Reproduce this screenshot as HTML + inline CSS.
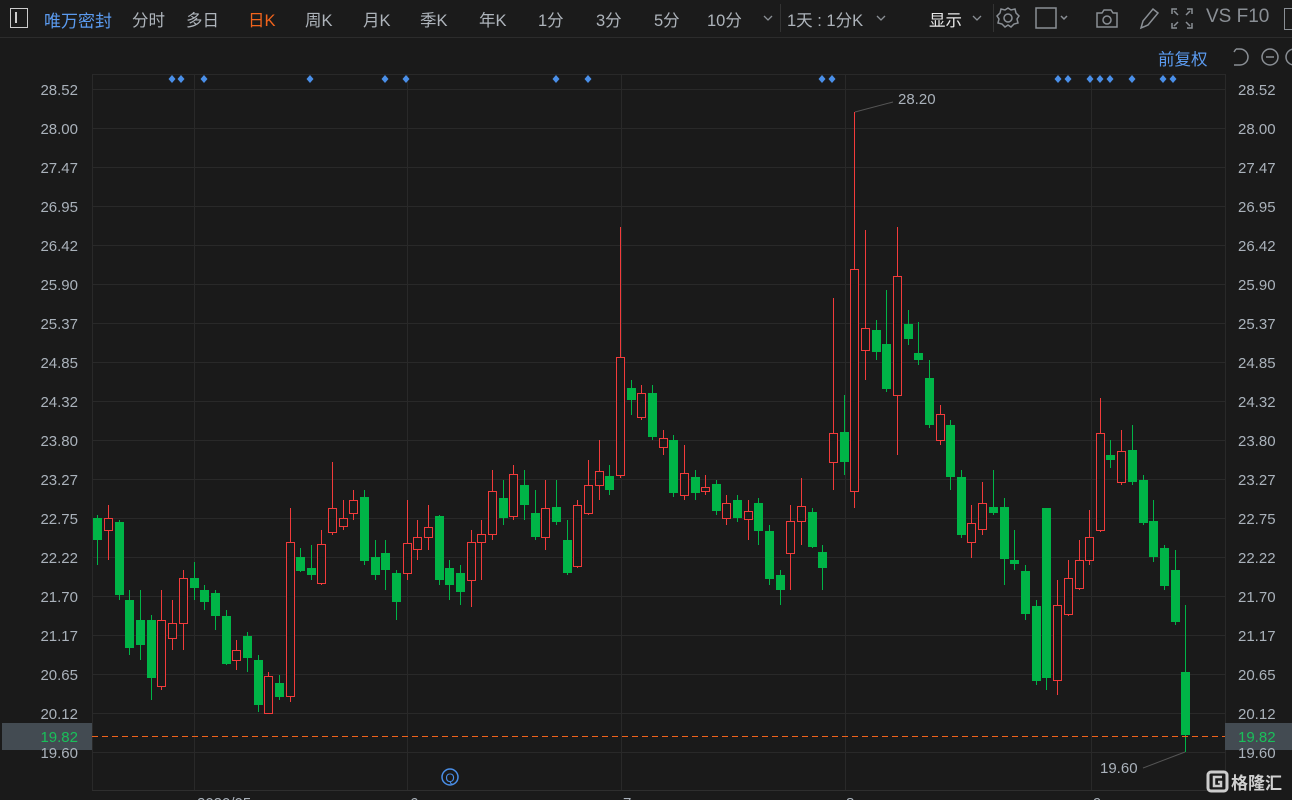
<!DOCTYPE html>
<html><head><meta charset="utf-8"><style>
html,body{margin:0;padding:0;background:#1a1a1a;width:1292px;height:800px;overflow:hidden;font-family:"Liberation Sans","Noto Sans CJK SC",sans-serif}
.t{position:absolute;top:7px;font-size:16.5px;color:#aeb4bb;white-space:nowrap}
</style></head><body>
<div style="position:absolute;left:0;top:0;width:1292px;height:37px;background:#1b1b1b;border-bottom:1px solid #2c2c2c"></div>
<div style="position:absolute;left:10px;top:8px;width:16px;height:18px;border:1.5px solid #ccc"></div>
<div style="position:absolute;left:15px;top:12px;width:1.5px;height:11px;background:#ccc"></div>
<div class="t" style="left:44px;color:#5b9bf0;font-size:17px">唯万密封</div>
<div class="t" style="left:132px">分时</div>
<div class="t" style="left:186px">多日</div>
<div class="t" style="left:248px;color:#f0631c">日K</div>
<div class="t" style="left:305px">周K</div>
<div class="t" style="left:363px">月K</div>
<div class="t" style="left:420px">季K</div>
<div class="t" style="left:479px">年K</div>
<div class="t" style="left:538px">1分</div>
<div class="t" style="left:596px">3分</div>
<div class="t" style="left:654px">5分</div>
<div class="t" style="left:707px">10分</div>
<svg style="position:absolute;left:0;top:0" width="1000" height="40" fill="none" stroke="#8a8f95" stroke-width="1.3"><path d="M764 16l4 4 4-4M877 16l4 4 4-4M973 16l4 4 4-4"/></svg>
<div style="position:absolute;left:780px;top:4px;width:1px;height:28px;background:#333"></div>
<div class="t" style="left:787px">1天 : 1分K</div>
<div class="t" style="left:929px;color:#e8e8e8">显示</div>
<div style="position:absolute;left:993px;top:4px;width:1px;height:28px;background:#333"></div>
<svg style="position:absolute;left:0;top:0" width="1292" height="40" fill="none" stroke="#8a8f95" stroke-width="1.5">
<circle cx="1008" cy="18" r="4"/><path d="M1008 8l3 2 4-1 1 4 3 3-2 3 1 4-4 1-3 3-3-2-3 2-3-3-4-1 1-4-2-3 3-3 1-4 4 1z"/>
<rect x="1036" y="8" width="20" height="20"/><path d="M1061 16l3 3 3-3"/>
<path d="M1097 13h5l2-3h7l2 3h4v14h-20z"/><circle cx="1107" cy="20" r="4"/>
<path d="M1141 28l2-7 10-12 5 4-10 12z"/>
<path d="M1172 14v-5h5M1187 9h5v5M1192 23v5h-5M1177 28h-5v-5M1174 11l4 4M1190 11l-4 4M1190 26l-4-4M1174 26l4-4"/>
</svg>
<div class="t" style="left:1206px;font-size:19px;top:6px;color:#8a8f95">VS F10</div>
<div style="position:absolute;left:1284px;top:8px;width:16px;height:20px;border:1.5px solid #8a8f95"></div>
<div style="position:absolute;left:1158px;top:46px;font-size:16.5px;color:#5b9bf0">前复权</div>
<svg style="position:absolute;left:1228px;top:44px" width="64" height="26" fill="none" stroke="#8a8f95" stroke-width="1.5">
<path d="M8 5h4a8 8 0 0 1 0 16h-6M8 5l-2 3"/><circle cx="42" cy="13" r="8"/><path d="M38 13h8"/><circle cx="66" cy="13" r="8"/>
</svg>
<svg id="c" style="position:absolute;left:0;top:0" width="1292" height="800"></svg>
<div style="position:absolute;left:2px;top:723px;width:90px;height:27px;background:#434b52"></div>
<div style="position:absolute;left:1225px;top:723px;width:67px;height:27px;background:#434b52"></div>
<svg style="position:absolute;left:0;top:0" width="1292" height="800" id="l"></svg>
<script>
var s='';
var ys=[[28.52,89],[28.00,128],[27.47,167],[26.95,206],[26.42,245],[25.90,284],[25.37,323],[24.85,362],[24.32,401],[23.80,440],[23.27,479],[22.75,518],[22.22,557],[21.70,596],[21.17,635],[20.65,674],[20.12,713],[19.60,752]];
s+='<line x1="92" y1="74.5" x2="1225" y2="74.5" stroke="#292929"/>';
ys.forEach(function(a){s+='<line x1="92" y1="'+(a[1]+.5)+'" x2="1225" y2="'+(a[1]+.5)+'" stroke="#292929"/>';});
[92,194,407,621,845,1091,1225].forEach(function(x){s+='<line x1="'+(x+.5)+'" y1="74" x2="'+(x+.5)+'" y2="790" stroke="#292929"/>';});
s+='<line x1="92" y1="790.5" x2="1225" y2="790.5" stroke="#2e2e2e"/>';
var d=[[97,518,540,515,565,0],[108,518,530,505,560,1],[119,522,595,520,600,0],[129,600,648,590,655,0],[140,620,645,590,660,0],[151,620,678,615,700,0],[161,620,686,590,690,1],[172,623,638,600,650,1],[183,578,623,570,650,1],[194,578,588,562,600,0],[204,590,602,585,610,0],[215,593,616,590,630,0],[226,616,664,610,665,0],[236,650,660,640,670,1],[247,636,658,632,672,0],[258,660,705,655,712,0],[268,676,713,672,714,1],[279,683,697,675,700,0],[290,542,696,508,702,1],[300,557,571,548,572,0],[311,568,575,545,580,0],[321,544,583,530,585,1],[332,508,532,462,535,1],[343,518,526,500,530,1],[353,500,513,490,520,1],[364,497,561,490,565,0],[375,557,575,540,580,0],[385,553,570,540,590,0],[396,573,602,570,620,0],[407,543,573,500,580,1],[417,537,549,520,560,1],[428,527,537,505,550,1],[439,516,580,515,585,0],[449,568,585,560,600,0],[460,573,592,565,605,0],[471,542,580,530,607,1],[481,534,542,520,580,1],[492,491,534,470,540,1],[503,498,518,480,525,0],[513,474,516,465,520,1],[524,485,505,470,520,0],[535,513,537,490,540,0],[545,508,537,480,550,1],[556,507,522,480,525,0],[567,540,573,520,575,0],[577,505,566,500,568,1],[588,485,513,460,515,1],[599,471,485,440,500,1],[609,476,490,465,495,0],[620,357,475,227,478,1],[631,388,400,380,415,0],[641,393,417,385,420,1],[652,393,437,385,440,0],[663,438,447,430,455,1],[673,440,493,435,497,0],[684,473,495,445,500,1],[695,477,493,470,500,0],[705,487,491,475,495,1],[716,484,511,480,515,0],[726,503,518,495,525,1],[737,500,518,495,522,0],[748,511,519,500,540,1],[758,503,531,498,545,0],[769,531,579,525,585,0],[780,575,590,570,605,0],[790,521,553,505,590,1],[801,506,521,478,545,1],[812,512,547,508,548,0],[822,552,568,545,590,0],[833,433,462,298,490,1],[844,432,462,395,475,0],[854,269,491,112,508,1],[865,328,350,230,380,1],[876,330,352,320,360,0],[886,344,389,290,392,0],[897,276,395,227,455,1],[908,324,339,310,345,0],[918,353,360,322,365,0],[929,378,425,360,428,0],[940,414,440,405,445,1],[950,425,477,420,490,0],[961,477,535,470,538,0],[971,523,542,505,558,1],[982,503,529,482,535,1],[993,507,513,470,515,0],[1004,507,559,498,585,0],[1014,560,564,530,570,0],[1025,571,614,565,620,0],[1036,606,681,600,685,0],[1046,508,678,508,690,0],[1057,605,680,580,695,1],[1068,578,614,560,616,1],[1079,560,588,540,590,1],[1089,537,560,510,565,1],[1100,433,530,398,532,1],[1110,455,460,440,468,0],[1121,451,482,430,485,1],[1132,450,482,425,485,0],[1143,480,523,475,525,0],[1153,521,557,500,562,0],[1164,548,586,545,590,0],[1175,570,622,550,625,0],[1185,672,735,605,752,0]];
d.forEach(function(c){var x=c[0],col=c[5]?'#f23b3b':'#00b447';
s+='<line x1="'+(x+.5)+'" y1="'+c[3]+'" x2="'+(x+.5)+'" y2="'+c[1]+'" stroke="'+col+'"/>';
s+='<line x1="'+(x+.5)+'" y1="'+c[2]+'" x2="'+(x+.5)+'" y2="'+c[4]+'" stroke="'+col+'"/>';
var h=Math.max(c[2]-c[1],1);
if(c[5])s+='<rect x="'+(x-3.5)+'" y="'+(c[1]+.5)+'" width="8" height="'+h+'" fill="#1a1a1a" stroke="'+col+'"/>';
else s+='<rect x="'+(x-4)+'" y="'+c[1]+'" width="9" height="'+h+'" fill="'+col+'"/>';});
[172,181,204,310,385,406,556,588,822,832,1058,1068,1090,1100,1110,1132,1163,1173].forEach(function(x){s+='<path d="M'+x+' 75l3.5 4-3.5 4-3.5-4z" fill="#4a8fe8"/>';});
s+='<line x1="92" y1="736.5" x2="1225" y2="736.5" stroke="#f0631c" stroke-dasharray="6,4"/>';
s+='<polyline points="855,112 893,102" stroke="#555" fill="none"/><polyline points="1185,752 1143,768" stroke="#555" fill="none"/>';
document.getElementById('c').innerHTML=s;
var t='';
ys.forEach(function(a){t+='<text x="78" y="'+(a[1]+6)+'" text-anchor="end" font-size="15" fill="#aab2bb">'+a[0].toFixed(2)+'</text>';t+='<text x="1238" y="'+(a[1]+6)+'" font-size="15" fill="#aab2bb">'+a[0].toFixed(2)+'</text>';});
t+='<text x="78" y="742" text-anchor="end" font-size="15" fill="#19c05a">19.82</text><text x="1238" y="742" font-size="15" fill="#19c05a">19.82</text>';
t+='<text x="898" y="104" font-size="15" fill="#aab2bb">28.20</text><text x="1100" y="773" font-size="15" fill="#aab2bb">19.60</text>';
t+='<circle cx="450" cy="777" r="8" fill="none" stroke="#4a8fe8" stroke-width="1.5"/><text x="450" y="782" text-anchor="middle" font-size="12" fill="#4a8fe8">Q</text>';
[[197,'2020/05'],[410,'6'],[623,'7'],[846,'8'],[1093,'9']].forEach(function(a){t+='<text x="'+a[0]+'" y="808" font-size="15" fill="#aab2bb">'+a[1]+'</text>';});
t+='<rect x="1208" y="772" width="19" height="19" rx="3" fill="none" stroke="#ccc" stroke-width="3"/><path d="M1222 777h-8v9h7v-4h-3" fill="none" stroke="#ccc" stroke-width="2.5"/>';
t+='<text x="1231" y="789" font-size="17" font-weight="bold" fill="#d0d0d0">格隆汇</text>';
document.getElementById('l').innerHTML=t;
</script>
</body></html>
